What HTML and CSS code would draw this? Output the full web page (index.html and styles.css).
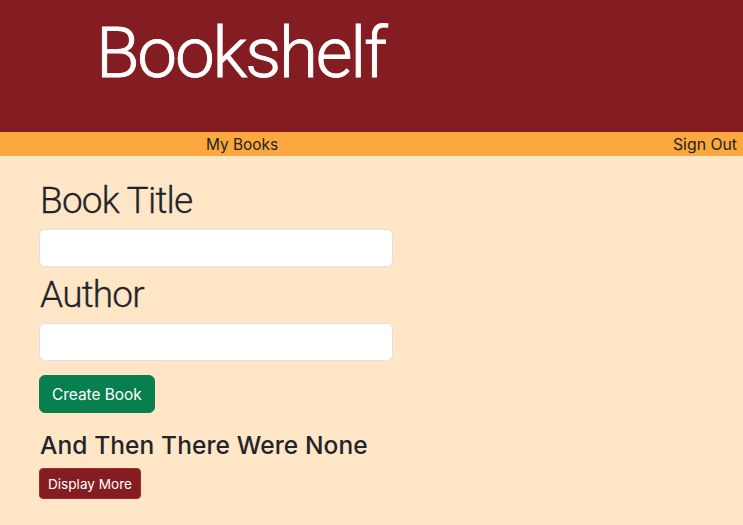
FILE: index.html
```html
<!DOCTYPE html>
<html lang="en">
<head>
<meta charset="utf-8">
<title>Bookshelf</title>
<link rel="stylesheet" href="styles.css">
</head>
<body>
<header class="masthead">
  <h1 class="brand">Bookshelf</h1>
</header>
<nav class="navbar">
  <a class="nav-link my-books" href="#">My Books</a>
  <a class="nav-link sign-out" href="#">Sign Out</a>
</nav>
<main class="content">
  <form class="book-form">
    <label class="field-label" for="title">Book Title</label>
    <input class="form-control" id="title" type="text">
    <label class="field-label" for="author">Author</label>
    <input class="form-control" id="author" type="text">
    <button class="btn btn-create" type="button">Create Book</button>
  </form>
  <section class="book">
    <h3 class="book-title">And Then There Were None</h3>
    <button class="btn btn-more" type="button">Display More</button>
  </section>
</main>
</body>
</html>
```
FILE: styles.css
```css
html, body {
  margin: 0;
  padding: 0;
}
body {
  background: #ffe6c7;
  font-family: Inter, "Liberation Sans", sans-serif;
  color: #212529;
  min-height: 525px;
}
.masthead {
  background: #841d22;
  height: 132px;
  padding-left: 96px;
  box-sizing: border-box;
  padding-top: 12px;
}
.brand {
  margin: 0;
  font-family: Roboto, Inter, sans-serif;
  font-weight: 300;
  font-size: 71px;
  line-height: 82px;
  color: #ffffff;
  letter-spacing: -2.2px;
  -webkit-text-stroke: 0.9px #ffffff;
}
.navbar {
  background: #fba83e;
  height: 24px;
  display: flex;
  align-items: center;
  font-size: 15.4px;
}
.nav-link {
  color: #212529;
  text-decoration: none;
}
.my-books {
  margin-left: 206px;
}
.sign-out {
  margin-left: auto;
  margin-right: 6px;
  font-size: 15.8px;
}
.content {
  padding: 23px 39px 0;
}
.book-form {
  display: flex;
  flex-direction: column;
  align-items: flex-start;
}
.field-label {
  font-family: Roboto, Inter, sans-serif;
  font-weight: 300;
  font-size: 37px;
  letter-spacing: -0.8px;
  line-height: 43px;
  padding-left: 1px;
  margin-bottom: 7px;
  color: #212529;
  -webkit-text-stroke: 0.3px #212529;
}
.form-control {
  width: 354px;
  height: 38px;
  box-sizing: border-box;
  border: 1px solid #dee2e6;
  border-radius: 6px;
  background: #fff;
  margin: 0 0 6px;
  padding: 6px 12px;
  font-size: 16px;
}
.btn {
  font-family: Inter, "Liberation Sans", sans-serif;
  color: #fff;
  cursor: pointer;
}
.btn-create {
  margin-top: 8px;
  height: 38px;
  padding: 0 12px;
  background: #087f4e;
  border: 1px solid #087f4e;
  border-radius: 6px;
  font-size: 15.4px;
}
.book {
  margin-top: 18px;
}
.book-title {
  margin: 0 0 8px;
  font-size: 24.5px;
  font-weight: 500;
  letter-spacing: 0.1px;
  line-height: 29px;
  padding-left: 1px;
}
.btn-more {
  height: 31px;
  padding: 0 8px;
  background: #841d22;
  border: 1px solid #a8292f;
  border-radius: 4px;
  font-size: 13.6px;
}
```
